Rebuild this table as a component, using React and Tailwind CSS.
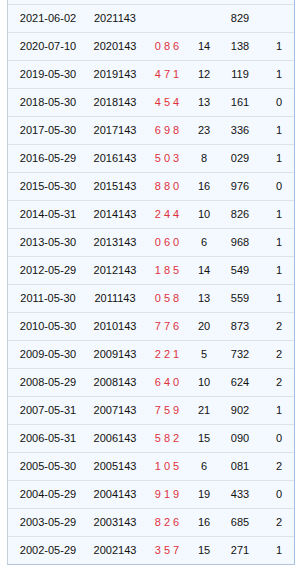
const rows = [
  ["2021-06-02", "2021143", "", "", "829", ""],
  ["2020-07-10", "2020143", "0 8 6", "14", "138", "1"],
  ["2019-05-30", "2019143", "4 7 1", "12", "119", "1"],
  ["2018-05-30", "2018143", "4 5 4", "13", "161", "0"],
  ["2017-05-30", "2017143", "6 9 8", "23", "336", "1"],
  ["2016-05-29", "2016143", "5 0 3", "8", "029", "1"],
  ["2015-05-30", "2015143", "8 8 0", "16", "976", "0"],
  ["2014-05-31", "2014143", "2 4 4", "10", "826", "1"],
  ["2013-05-30", "2013143", "0 6 0", "6", "968", "1"],
  ["2012-05-29", "2012143", "1 8 5", "14", "549", "1"],
  ["2011-05-30", "2011143", "0 5 8", "13", "559", "1"],
  ["2010-05-30", "2010143", "7 7 6", "20", "873", "2"],
  ["2009-05-30", "2009143", "2 2 1", "5", "732", "2"],
  ["2008-05-29", "2008143", "6 4 0", "10", "624", "2"],
  ["2007-05-31", "2007143", "7 5 9", "21", "902", "1"],
  ["2006-05-31", "2006143", "5 8 2", "15", "090", "0"],
  ["2005-05-30", "2005143", "1 0 5", "6", "081", "2"],
  ["2004-05-29", "2004143", "9 1 9", "19", "433", "0"],
  ["2003-05-29", "2003143", "8 2 6", "16", "685", "2"],
  ["2002-05-29", "2002143", "3 5 7", "15", "271", "1"],
];

export default function App() {
  return (
    <div className="bg-white w-[301px] h-[571px]" style={{ fontFamily: '"Liberation Sans", Arial, sans-serif' }}>
      <div className="ml-[7px] w-[288px] bg-[#f4f9ff] border-l border-r border-b border-l-[#c3cfdb] border-r-[#a3bfe0] border-b-[#b4c6da] text-[11px] text-[#111]">
        {/* top of previous row, cut off */}
        <div className="h-[4px]" />
        {rows.map((r) => (
          <div
            key={r[1]}
            className="grid grid-cols-[80px_54px_50px_24px_48px_30px] h-[28px] items-center border-t border-[#dde3ea] text-center"
          >
            <span>{r[0]}</span>
            <span>{r[1]}</span>
            <span className="text-[#e0323c]">{r[2]}</span>
            <span>{r[3]}</span>
            <span>{r[4]}</span>
            <span>{r[5]}</span>
          </div>
        ))}
      </div>
    </div>
  );
}
